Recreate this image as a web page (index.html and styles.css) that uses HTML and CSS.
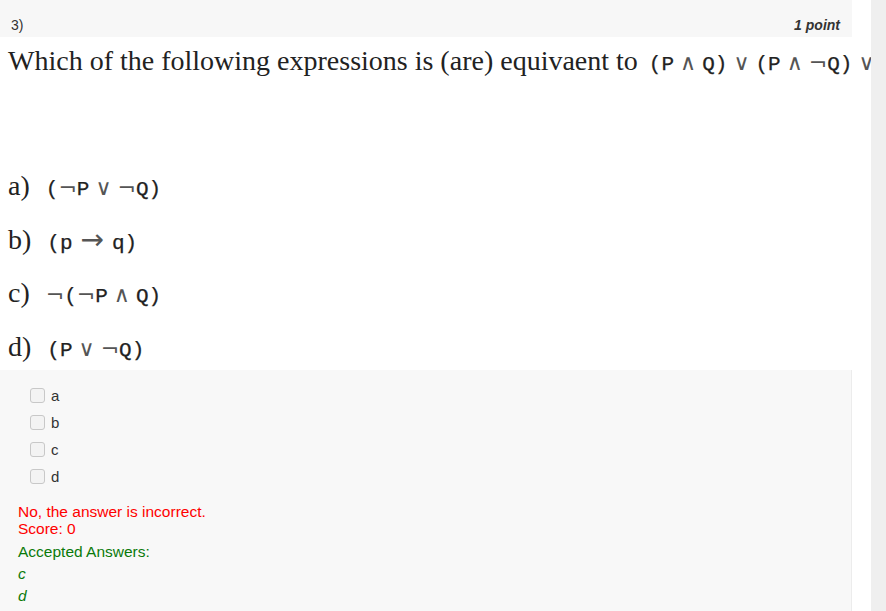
FILE: index.html
```html
<!DOCTYPE html>
<html>
<head>
<meta charset="utf-8">
<link rel="stylesheet" href="styles.css">
</head>
<body>
<div class="page">
  <div class="main">
    <div class="header">
      <span class="qnum">3)</span>
      <span class="points">1 point</span>
    </div>
    <div class="question">
      <div class="stem">Which of the following expressions is (are) equivaent to <span class="math"><span class="tt">(P</span><span class="op">∧</span><span class="tt">Q)</span><span class="op">∨</span><span class="tt">(P</span><span class="op">∧</span><span class="neg">¬</span><span class="tt">Q)</span><span class="op">∨</span></span></div>
      <div class="options">
        <div class="opt"><span class="lbl">a)</span><span class="math"><span class="tt">(</span><span class="neg">¬</span><span class="tt">P</span><span class="op">∨</span><span class="neg">¬</span><span class="tt">Q)</span></span></div>
        <div class="opt"><span class="lbl">b)</span><span class="math"><span class="tt">(p</span><span class="arrow">→</span><span class="tt">q)</span></span></div>
        <div class="opt"><span class="lbl">c)</span><span class="math"><span class="neg">¬</span><span class="tt">(</span><span class="neg">¬</span><span class="tt">P</span><span class="op">∧</span><span class="tt">Q)</span></span></div>
        <div class="opt"><span class="lbl">d)</span><span class="math"><span class="tt">(P</span><span class="op">∨</span><span class="neg">¬</span><span class="tt">Q)</span></span></div>
      </div>
    </div>
    <div class="panel">
      <ul class="choices">
        <li><span class="box"></span>a</li>
        <li><span class="box"></span>b</li>
        <li><span class="box"></span>c</li>
        <li><span class="box"></span>d</li>
      </ul>
      <div class="wrong">No, the answer is incorrect.<br>Score: 0</div>
      <div class="accepted">Accepted Answers:</div>
      <div class="ans">c</div>
      <div class="ans">d</div>
    </div>
  </div>
  <div class="strip"></div>
</div>
</body>
</html>
```

FILE: styles.css
```css
html, body {
  margin: 0;
  padding: 0;
  background: #ffffff;
}
body {
  font-family: "Liberation Sans", Arial, sans-serif;
  color: #333333;
  width: 886px;
  height: 611px;
  overflow: hidden;
}
.page {
  display: flex;
  height: 611px;
}
.main {
  width: 871px;
  display: flex;
  flex-direction: column;
}
.strip {
  width: 15px;
  background: #efefef;
}
.header {
  width: 852px;
  height: 37px;
  box-sizing: border-box;
  background: #f7f7f7;
  display: flex;
  justify-content: space-between;
  align-items: flex-end;
  padding: 0 12px 3px 11px;
  font-size: 14px;
  line-height: 17px;
}
.points {
  font-weight: bold;
  font-style: italic;
}
.question {
  height: 333px;
  background: #ffffff;
  font-family: "Liberation Serif", "Times New Roman", serif;
  color: #222222;
  font-size: 28px;
  overflow: hidden;
  white-space: nowrap;
}
.stem {
  padding: 9px 0 0 8px;
  height: 30px;
  line-height: 30px;
}
.stem .math {
  margin-left: 4px;
}
.tt {
  font-family: "Liberation Mono", "Courier New", monospace;
  font-size: 21px;
  color: #222222;
  -webkit-text-stroke: 0.25px #222222;
}
.op {
  font-family: "DejaVu Sans", sans-serif;
  font-size: 22px;
  margin: 0 6px;
  color: #555555;
}
.neg {
  font-family: "DejaVu Sans", sans-serif;
  font-size: 22px;
  color: #555555;
}
.arrow {
  font-family: "DejaVu Sans", sans-serif;
  font-size: 28px;
  margin: 0 8px;
  color: #555555;
}
.options {
  display: flex;
  flex-direction: column;
  gap: 23.7px;
  padding: 95px 0 0 8px;
}
.opt {
  height: 30px;
  line-height: 30px;
  display: flex;
  gap: 16px;
}
.panel {
  flex: 1;
  width: 852px;
  box-sizing: border-box;
  background: #f8f8f8;
  border-right: 1px solid #ececec;
  padding: 17px 0 0 18px;
  font-size: 15px;
}
.choices {
  list-style: none;
  margin: 0;
  padding: 0 0 0 12px;
  display: flex;
  flex-direction: column;
  gap: 10px;
}
.choices li {
  display: flex;
  align-items: center;
  gap: 6px;
  line-height: 17px;
}
.box {
  width: 13px;
  height: 13px;
  border: 1px solid #c8c8c8;
  border-radius: 3px;
  background: #f3f3f3;
}
.wrong {
  color: #ff0000;
  margin-top: 18px;
  line-height: 17px;
  font-size: 15.5px;
}
.accepted {
  color: #0a7a0a;
  margin-top: 6px;
  line-height: 17px;
  font-size: 15.5px;
}
.ans {
  color: #0a7a0a;
  font-style: italic;
  margin-top: 5px;
  line-height: 17px;
  font-size: 15.5px;
}
```
